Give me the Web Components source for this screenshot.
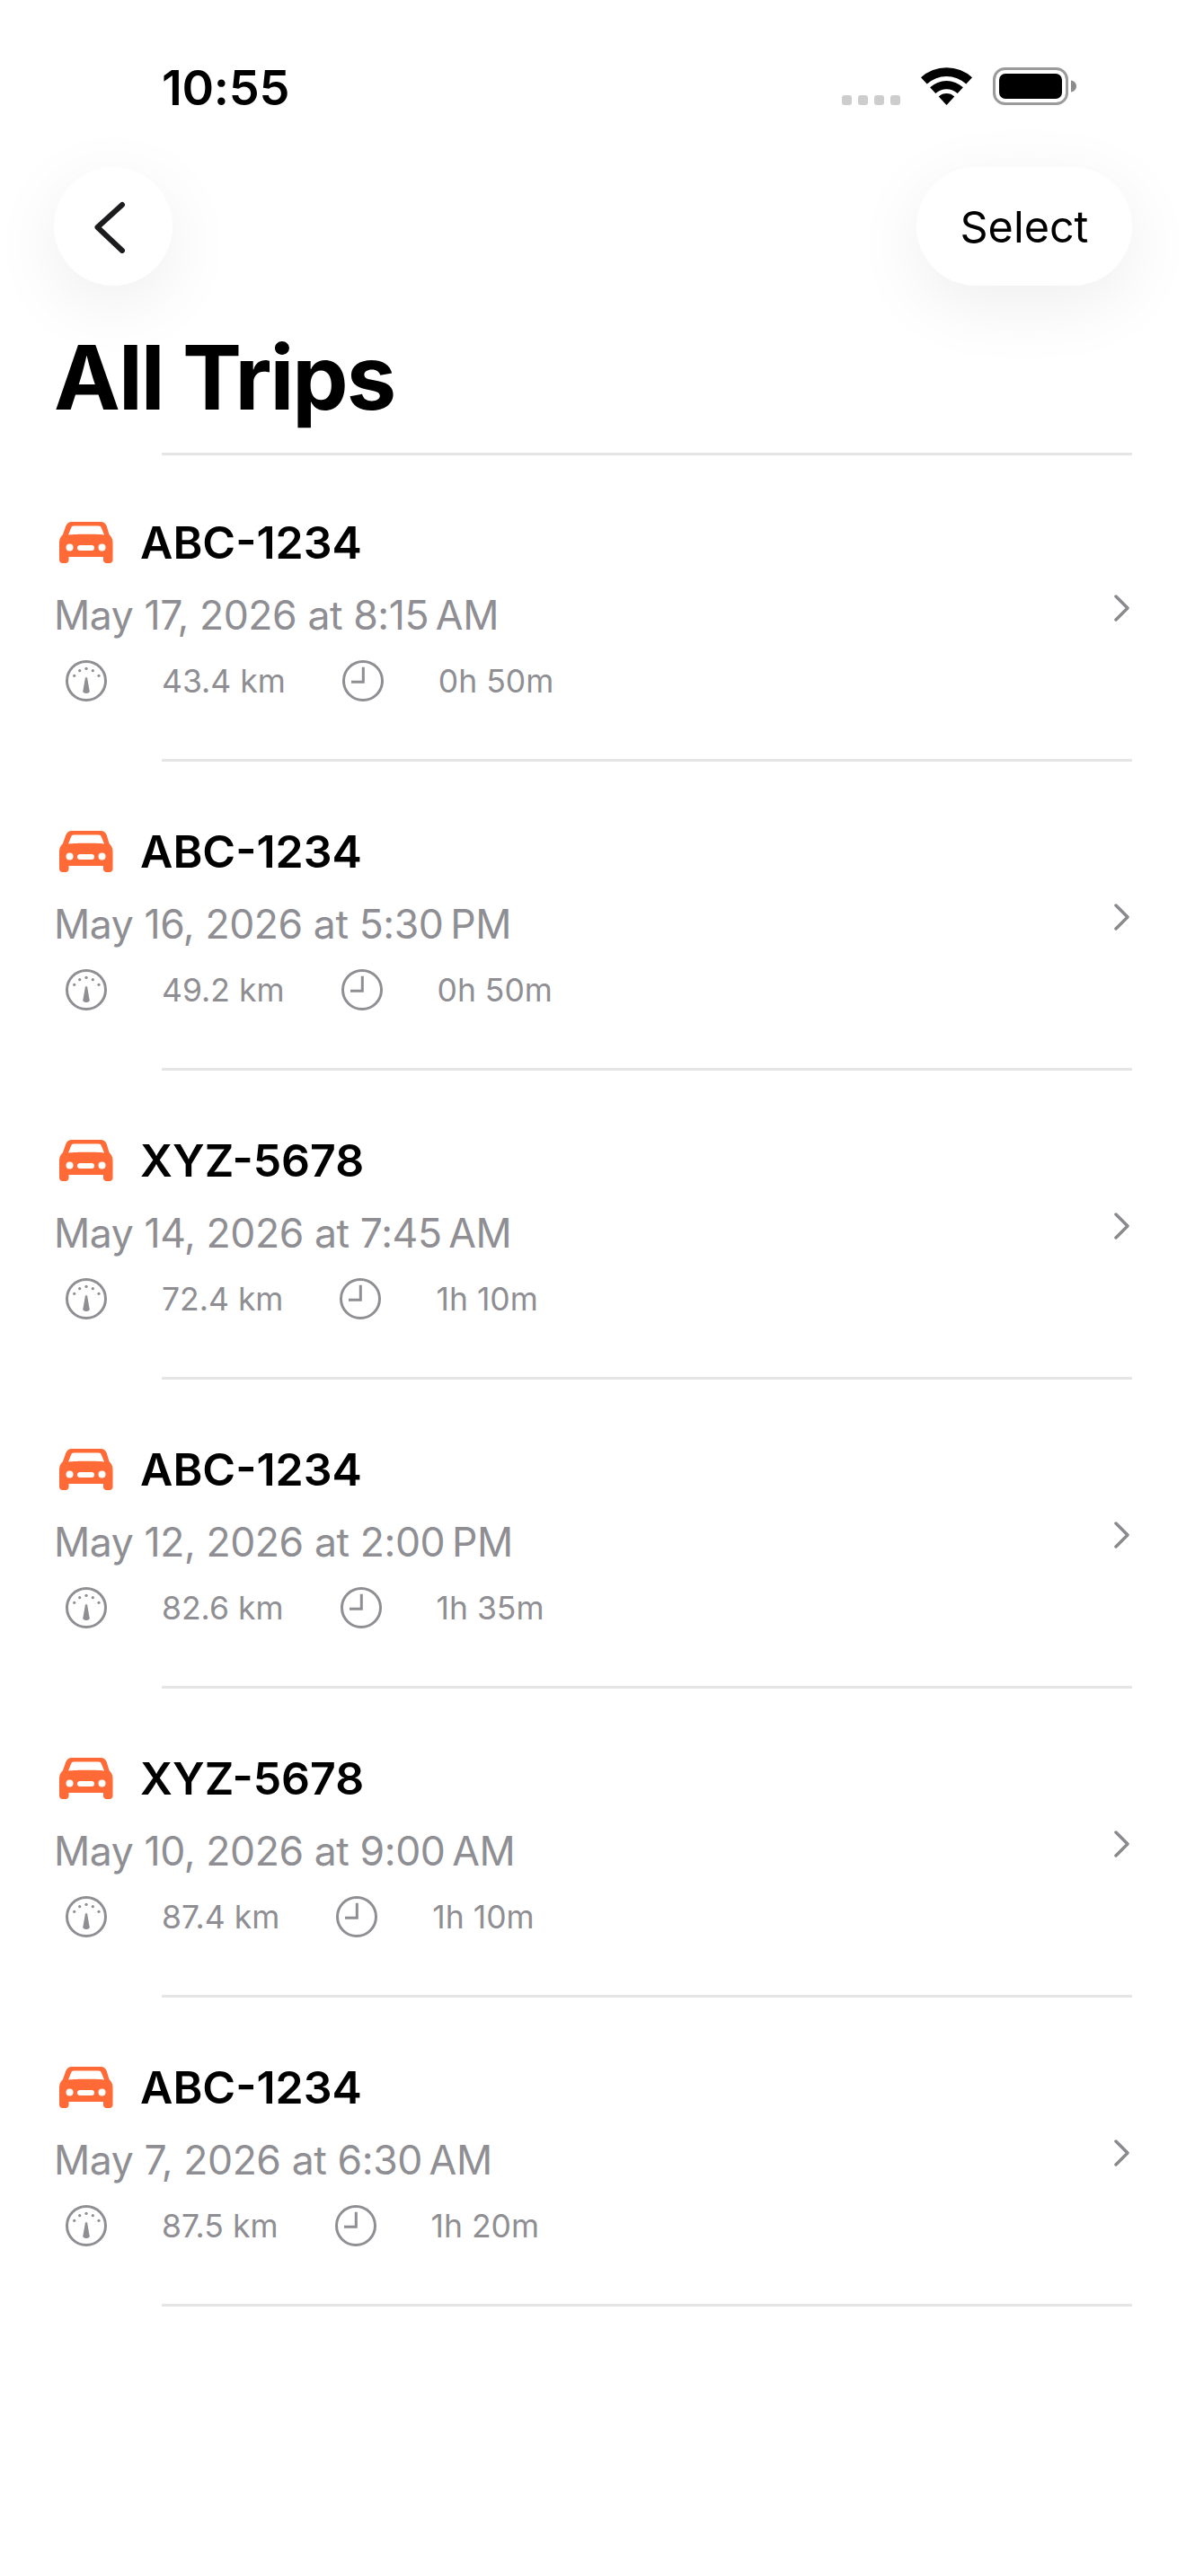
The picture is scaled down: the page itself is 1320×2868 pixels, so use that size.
<!DOCTYPE html>
<html>
<head>
<meta charset="utf-8">
<title>All Trips</title>
<style>
    html, body { margin: 0; background: #fff; }
    body { font-family: Inter, "Liberation Sans", sans-serif; }
</style>
</head>
<body>
<trips-screen>
    <trip-row><span slot="plate">ABC-1234</span><span slot="date">May 17, 2026 at 8:15&#8239;AM</span><span slot="distance">43.4 km</span><span slot="duration">0h 50m</span></trip-row>
    <trip-row><span slot="plate">ABC-1234</span><span slot="date">May 16, 2026 at 5:30&#8239;PM</span><span slot="distance">49.2 km</span><span slot="duration">0h 50m</span></trip-row>
    <trip-row><span slot="plate">XYZ-5678</span><span slot="date">May 14, 2026 at 7:45&#8239;AM</span><span slot="distance">72.4 km</span><span slot="duration">1h 10m</span></trip-row>
    <trip-row><span slot="plate">ABC-1234</span><span slot="date">May 12, 2026 at 2:00&#8239;PM</span><span slot="distance">82.6 km</span><span slot="duration">1h 35m</span></trip-row>
    <trip-row><span slot="plate">XYZ-5678</span><span slot="date">May 10, 2026 at 9:00&#8239;AM</span><span slot="distance">87.4 km</span><span slot="duration">1h 10m</span></trip-row>
    <trip-row><span slot="plate">ABC-1234</span><span slot="date">May 7, 2026 at 6:30&#8239;AM</span><span slot="distance">87.5 km</span><span slot="duration">1h 20m</span></trip-row>
</trips-screen>

<script>
class StatusBar extends HTMLElement {
    constructor() {
        super();
        this.attachShadow({ mode: 'open' });
        this.shadowRoot.innerHTML = `
            <style>
                :host {
                    display: flex;
                    align-items: flex-start;
                    justify-content: space-between;
                    height: 186px;
                    box-sizing: border-box;
                    padding: 69px 122px 0 180px;
                    color: #000;
                }
                .time {
                    font-size: 54px;
                    line-height: 58px;
                    font-weight: 600;
                    letter-spacing: -0.3px;
                }
                .icons {
                    display: flex;
                    align-items: flex-end;
                    margin-top: 6px;
                }
                .dots {
                    display: flex;
                    gap: 7px;
                    margin-right: 23px;
                }
                .dots i {
                    width: 11px;
                    height: 11px;
                    border-radius: 3px;
                    background: #cdcdcd;
                }
                svg { display: block; }
                .wifi { margin-right: 23px; }
            </style>
            <span class="time">10:55</span>
            <div class="icons">
                <div class="dots"><i></i><i></i><i></i><i></i></div>
                <svg class="wifi" width="57" height="42" viewBox="0 0 57 42" fill="#000">
                    <path d="M0 11.3A42 42 0 0 1 57 11.3L50.3 18.6A32 32 0 0 0 6.7 18.6Z"/>
                    <path d="M10.1 22.3A27 27 0 0 1 46.9 22.3L40.7 28.9A18 18 0 0 0 16.3 28.9Z"/>
                    <path d="M19.7 32.5A13 13 0 0 1 37.3 32.5L28.5 42Z"/>
                </svg>
                <svg width="93" height="42" viewBox="0 0 93 42">
                    <rect x="1.5" y="1.5" width="81" height="39" rx="12" fill="none" stroke="#9b9b9b" stroke-width="3"/>
                    <rect x="7" y="7" width="70" height="28" rx="7" fill="#000"/>
                    <path d="M87 14.5c3 .6 6 2.800 6 6.500s-3 5.900-6 6.500Z" fill="#8c8c8c"/>
                </svg>
            </div>
        `;
    }
}

class RoundButton extends HTMLElement {
    constructor() {
        super();
        this.attachShadow({ mode: 'open' });
        this.shadowRoot.innerHTML = `
            <style>
                :host {
                    display: flex;
                    align-items: center;
                    justify-content: center;
                    box-sizing: border-box;
                    height: 132px;
                    min-width: 132px;
                    border-radius: 66px;
                    background: #fff;
                    box-shadow: 0 20px 80px rgba(0,0,0,0.07);
                    font-size: 48.5px;
                    color: #000;
                }
                :host([wide]) { width: 240px; }
            </style>
            <slot></slot>
        `;
    }
}

class TripRow extends HTMLElement {
    constructor() {
        super();
        this.attachShadow({ mode: 'open' });
        this.shadowRoot.innerHTML = `
            <style>
                :host {
                    display: block;
                    color: #000;
                }
                .row {
                    display: flex;
                    align-items: flex-start;
                    justify-content: space-between;
                    height: 341px;
                    box-sizing: border-box;
                    padding: 70px 3px 0 0;
                }
                .info {
                    display: flex;
                    flex-direction: column;
                }
                .plate {
                    display: flex;
                    align-items: center;
                    gap: 30px;
                    height: 60px;
                    padding-left: 6px;
                    font-size: 50px;
                    font-weight: 600;
                }
                .date {
                    margin-top: 21px;
                    height: 60px;
                    line-height: 60px;
                    font-size: 44.5px;
                    letter-spacing: -0.4px;
                    color: #8e8e93;
                }
                .stats {
                    display: flex;
                    align-items: center;
                    margin-top: 20px;
                    height: 46px;
                    padding-left: 13px;
                    font-size: 35.5px;
                    color: #8e8e93;
                }
                .stats span { margin-left: 61px; margin-right: 63px; }
                svg { display: block; flex: none; }
                .chev { margin-top: 88px; }
                .line {
                    height: 3px;
                    margin-left: 120px;
                    background: #e5e5e5;
                }
            </style>
            <div class="row">
                <div class="info">
                    <div class="plate">
                        <svg width="60" height="46" viewBox="0 0 60 46">
                            <path fill="#ff6a36" d="M14 0H46C49.500 0 51.500 1.500 52.800 5L55.500 14C58 16.500 59.500 19 59.500 23V42C59.500 44.500 58 46 56 46H52.500C50.500 46 49 44.500 49 42.500V39H10.500V42.500C10.500 44.500 9 46 7 46H3.500C1.500 46 0 44.500 0 42V23C0 19 1.500 16.500 4 14L7.200 5C8.500 1.500 10.500 0 14 0Z"/>
                            <path fill="#fff" d="M16 4.500H44C45.500 4.500 46.300 5.200 46.800 6.500L50 14.500C41 13.500 19 13.500 10 14.500L13.200 6.500C13.700 5.200 14.500 4.500 16 4.500Z"/>
                            <circle cx="11.500" cy="28.500" r="4" fill="#fff"/>
                            <circle cx="47.500" cy="28.500" r="4" fill="#fff"/>
                            <rect x="20" y="26" width="19" height="6" rx="3" fill="#fff"/>
                        </svg>
                        <slot name="plate"></slot>
                    </div>
                    <div class="date"><slot name="date"></slot></div>
                    <div class="stats">
                        <svg width="46" height="46" viewBox="0 0 46 46" fill="#8e8e93">
                            <circle cx="23" cy="23" r="21.500" fill="none" stroke="#8e8e93" stroke-width="3"/>
                            <circle cx="9.700" cy="17.300" r="1.600"/>
                            <circle cx="15.700" cy="11.700" r="1.600"/>
                            <circle cx="23" cy="9.300" r="1.600"/>
                            <circle cx="30.300" cy="11.700" r="1.600"/>
                            <circle cx="37" cy="17.300" r="1.600"/>
                            <path d="M22 19.300H24L26.700 34.500C26.900 36 25.500 37 23 37S19.100 36 19.300 34.500Z"/>
                        </svg>
                        <span><slot name="distance"></slot></span>
                        <svg width="46" height="46" viewBox="0 0 46 46" fill="none" stroke="#8e8e93" stroke-width="3">
                            <circle cx="23" cy="23" r="21.500"/>
                            <path d="M23.300 7.700V24.300H10"/>
                        </svg>
                        <span><slot name="duration"></slot></span>
                    </div>
                </div>
                <svg class="chev" width="17" height="30" viewBox="0 0 17 30" fill="none" stroke="#8a8a8e" stroke-width="3.500" stroke-linecap="round" stroke-linejoin="round">
                    <path d="M2 2L15 15L2 28"/>
                </svg>
            </div>
            <div class="line"></div>
        `;
    }
}

class TripsScreen extends HTMLElement {
    constructor() {
        super();
        this.attachShadow({ mode: 'open' });
        this.shadowRoot.innerHTML = `
            <style>
                :host {
                    display: block;
                    width: 1320px;
                    height: 2868px;
                    background: #fff;
                    overflow: hidden;
                }
                .content { padding: 0 60px; }
                .nav {
                    display: flex;
                    justify-content: space-between;
                }
                .nav svg { display: block; }
                h1 {
                    margin: 0;
                    padding-top: 44px;
                    height: 186px;
                    box-sizing: border-box;
                    line-height: 116px;
                    font-size: 99px;
                    font-weight: 700;
                    letter-spacing: -2px;
                    color: #000;
                    position: relative;
                }
                .line {
                    height: 3px;
                    margin: 0 0 -3px 120px;
                    background: #e5e5e5;
                }
            </style>
            <status-bar></status-bar>
            <div class="content">
                <div class="nav">
                    <round-button>
                        <svg width="42" height="60" viewBox="0 0 42 60" fill="none" stroke="#1c1c1e" stroke-width="6" stroke-linecap="round" stroke-linejoin="round">
                            <path d="M31 6L3.500 31L31 57"/>
                        </svg>
                    </round-button>
                    <round-button wide>Select</round-button>
                </div>
                <h1>All Trips</h1>
                <div class="line"></div>
                <slot></slot>
            </div>
        `;
    }
}

customElements.define('status-bar', StatusBar);
customElements.define('round-button', RoundButton);
customElements.define('trip-row', TripRow);
customElements.define('trips-screen', TripsScreen);
</script>
</body>
</html>
